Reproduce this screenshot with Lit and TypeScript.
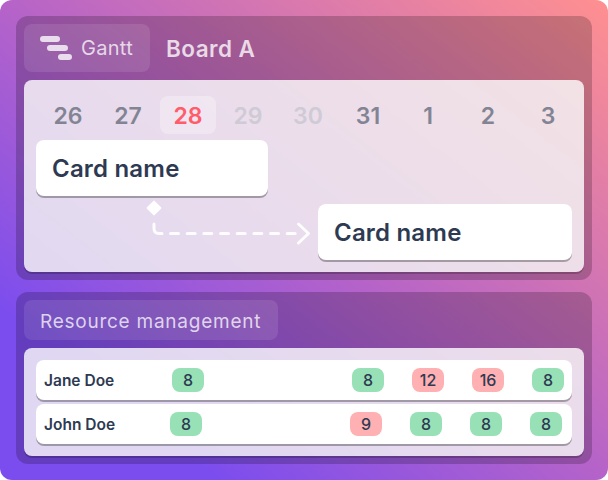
import { LitElement, html, css, svg } from "lit";
import { customElement } from "lit/decorators.js";

const dates = [
  ["26", ""], ["27", ""], ["28", "today"], ["29", "off"], ["30", "off"],
  ["31", ""], ["1", ""], ["2", ""], ["3", ""],
];
const jane: (number | null)[] = [8, null, null, 8, 12, 16, 8];
const john: (number | null)[] = [8, null, null, 9, 8, 8, 8];

@customElement("app-root")
export class AppRoot extends LitElement {
  static styles = css`
    :host {
      display: block;
      width: 608px;
      height: 480px;
      font-family: Inter, "Liberation Sans", sans-serif;
      background: #fff;
    }
    * { box-sizing: border-box; }
    .page {
      width: 608px;
      height: 480px;
      border-radius: 12px;
      padding: 16px;
      display: flex;
      flex-direction: column;
      gap: 12px;
      background: linear-gradient(218deg, #ff9090 0%, #b563c9 50%, #7c4dee 82%, #7c4dee 100%);
    }
    .panel {
      border-radius: 12px;
      padding: 8px;
      background: rgba(0, 0, 0, 0.2);
      display: flex;
      flex-direction: column;
      gap: 8px;
    }
    .top { height: 264px; }
    .bottom { height: 172px; }
    .head {
      display: flex;
      align-items: center;
      gap: 16px;
      height: 48px;
      flex: none;
    }
    .tab {
      display: flex;
      align-items: center;
      border-radius: 8px;
      background: rgba(255, 255, 255, 0.1);
      color: rgba(255, 255, 255, 0.75);
    }
    .gantt {
      width: 126px;
      height: 48px;
      padding-left: 16px;
      gap: 8px;
      font-size: 20px;
      letter-spacing: 0.3px;
    }
    .board {
      font-size: 22.5px;
      font-weight: 600;
      letter-spacing: 0.45px;
      color: rgba(255, 255, 255, 0.78);
    }
    .res {
      width: 254px;
      height: 40px;
      padding: 2px 0 0 16px;
      font-size: 19px;
      letter-spacing: 0.75px;
      flex: none;
    }
    .sheet {
      flex: 1;
      border-radius: 8px;
      background: rgba(255, 255, 255, 0.8);
      box-shadow: 0 2px 0 rgba(0, 0, 0, 0.2);
    }
    .gsheet {
      padding: 16px 12px 0;
      display: flex;
      flex-direction: column;
    }
    .dates {
      display: grid;
      grid-template-columns: repeat(9, 60px);
      margin-left: 2px;
      height: 44px;
    }
    .date {
      margin: 0 2px;
      height: 38px;
      padding-top: 2px;
      border-radius: 8px;
      display: flex;
      align-items: center;
      justify-content: center;
      font-size: 23px;
      font-weight: 600;
      color: #828494;
    }
    .date.today { background: rgba(255, 255, 255, 0.3); color: #ff5c6c; }
    .date.off { color: #cfcbd6; }
    .card {
      height: 56px;
      border-radius: 8px;
      background: #fff;
      box-shadow: 0 2px 0 rgba(0, 0, 0, 0.3);
      display: flex;
      align-items: center;
      padding-left: 16px;
      font-size: 24px;
      font-weight: 600;
      letter-spacing: 0.2px;
      color: #2d3a52;
    }
    .c1 { width: 232px; }
    .c2 { width: 254px; }
    .link { display: flex; margin-top: 8px; }
    .link svg { display: block; flex: none; overflow: visible; }
    .rsheet {
      padding: 12px 12px 0;
      display: flex;
      flex-direction: column;
      gap: 4px;
    }
    .row {
      height: 40px;
      border-radius: 8px;
      background: #fff;
      box-shadow: 0 2px 0 rgba(0, 0, 0, 0.3);
      display: flex;
      align-items: center;
      padding-left: 8px;
      color: #2d3a52;
    }
    .name {
      font-size: 15.5px;
      font-weight: 600;
      padding-top: 1px;
      flex: none;
    }
    .jane .name { width: 128px; }
    .john .name { width: 126px; }
    .cells {
      display: grid;
      grid-template-columns: repeat(7, 32px);
      column-gap: 28px;
    }
    .badge {
      width: 32px;
      height: 24px;
      border-radius: 8px;
      display: flex;
      align-items: center;
      justify-content: center;
      font-size: 16px;
      font-weight: 500;
    }
    .ok { background: #98e0b6; }
    .over { background: #ffb0b2; }
  `;

  private cells(values: (number | null)[]) {
    return values.map((v) =>
      v === null
        ? html`<span></span>`
        : html`<span class="badge ${v === 8 ? "ok" : "over"}">${v}</span>`
    );
  }

  render() {
    return html`
      <div class="page">
        <section class="panel top">
          <div class="head">
            <div class="tab gantt">
              <svg width="33" height="26" viewBox="0 0 33 26">
                <g fill="none" stroke="rgba(255,255,255,0.78)" stroke-width="6" stroke-linecap="round">
                  <path d="M3 4H17M10 13H25M21 22H29"></path>
                </g>
              </svg>
              <span>Gantt</span>
            </div>
            <div class="board">Board A</div>
          </div>
          <div class="sheet gsheet">
            <div class="dates">
              ${dates.map(([d, c]) => html`<div class="date ${c}">${d}</div>`)}
            </div>
            <div class="card c1">Card name</div>
            <div class="link">
              <svg width="282" height="56" viewBox="0 0 282 56" fill="none" stroke="rgba(255,255,255,0.92)" stroke-width="3" stroke-linecap="round" stroke-linejoin="round">
                ${svg`<rect x="112.5" y="-1.5" width="11" height="11" fill="#fff" stroke="none" rx="1" transform="rotate(45 118 4)"></rect>
                <path d="M118 20V24.5Q118 29.5 123 29.5H126"></path>
                <path d="M134.5 29.5H260" stroke-dasharray="8 8.67"></path>
                <path d="M262.5 20L272.5 29.5L262.5 39"></path>`}
              </svg>
              <div class="card c2">Card name</div>
            </div>
          </div>
        </section>
        <section class="panel bottom">
          <div class="tab res">Resource management</div>
          <div class="sheet rsheet">
            <div class="row jane"><span class="name">Jane Doe</span><div class="cells">${this.cells(jane)}</div></div>
            <div class="row john"><span class="name">John Doe</span><div class="cells">${this.cells(john)}</div></div>
          </div>
        </section>
      </div>
    `;
  }
}
